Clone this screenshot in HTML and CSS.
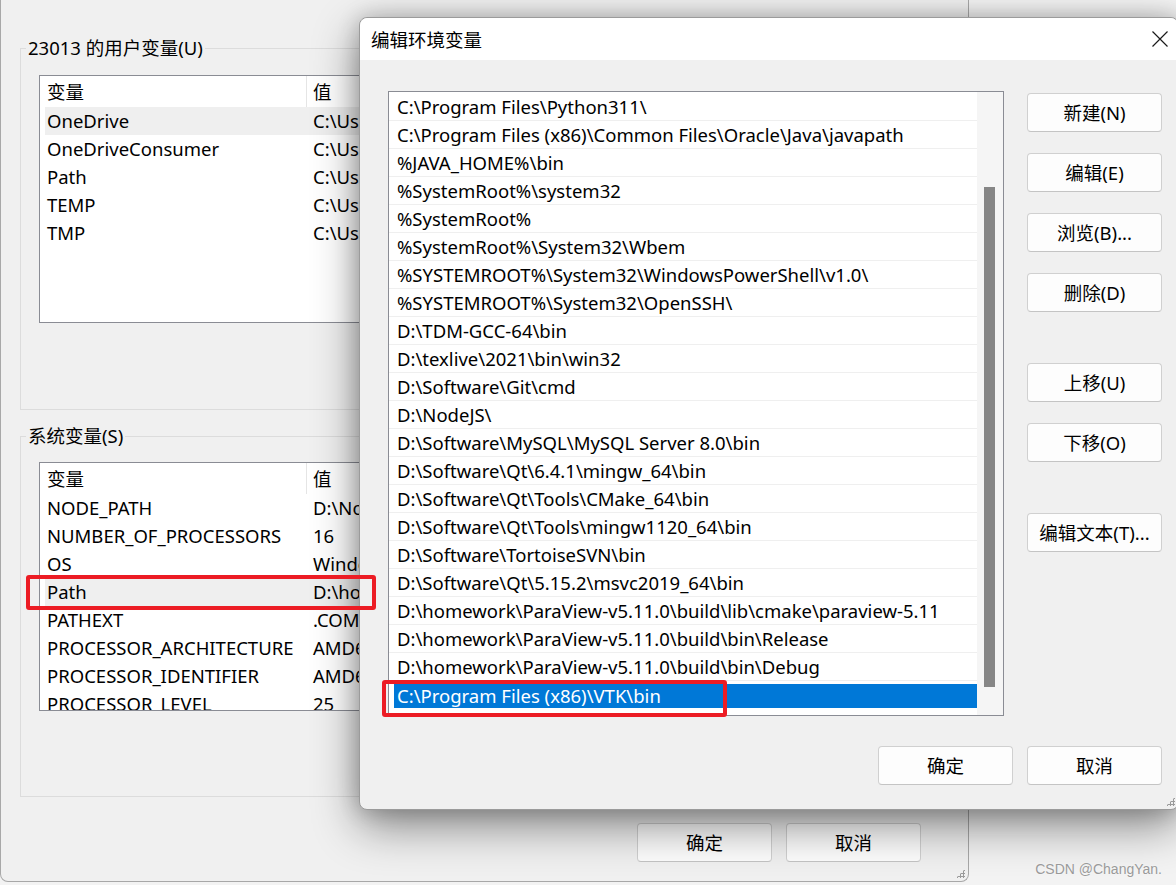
FILE: index.html
```html
<!DOCTYPE html>
<html lang="zh-CN">
<head>
  <meta charset="UTF-8">
  <meta name="viewport" content="width=device-width, initial-scale=1.0">
  <title>编辑环境变量</title>
  <link rel="stylesheet" href="styles.css">
</head>

<body>
  <!-- Background: environment variables window -->
  <div id="env-window" class="window">
    <fieldset class="group group-user">
      <legend>23013 的用户变量(U)</legend>
      <div class="var-list user-list">
        <div class="var-head"><span class="col-name">变量</span><span class="col-value">值</span></div>
        <div class="var-row hover"><span class="col-name">OneDrive</span><span class="col-value">C:\Users</span></div>
        <div class="var-row"><span class="col-name">OneDriveConsumer</span><span class="col-value">C:\Users</span></div>
        <div class="var-row"><span class="col-name">Path</span><span class="col-value">C:\Users</span></div>
        <div class="var-row"><span class="col-name">TEMP</span><span class="col-value">C:\Users</span></div>
        <div class="var-row"><span class="col-name">TMP</span><span class="col-value">C:\Users</span></div>
      </div>
    </fieldset>

    <fieldset class="group group-system">
      <legend>系统变量(S)</legend>
      <div class="var-list system-list">
        <div class="var-head"><span class="col-name">变量</span><span class="col-value">值</span></div>
        <div class="var-row"><span class="col-name">NODE_PATH</span><span class="col-value">D:\NodeJS</span></div>
        <div class="var-row"><span class="col-name">NUMBER_OF_PROCESSORS</span><span class="col-value">16</span></div>
        <div class="var-row"><span class="col-name">OS</span><span class="col-value">Windows_NT</span></div>
        <div class="var-row hover"><span class="col-name">Path</span><span class="col-value">D:\homework</span></div>
        <div class="var-row"><span class="col-name">PATHEXT</span><span class="col-value">.COM;.EXE</span></div>
        <div class="var-row"><span class="col-name">PROCESSOR_ARCHITECTURE</span><span class="col-value">AMD64</span></div>
        <div class="var-row"><span class="col-name">PROCESSOR_IDENTIFIER</span><span class="col-value">AMD64</span></div>
        <div class="var-row"><span class="col-name">PROCESSOR_LEVEL</span><span class="col-value">25</span></div>
      </div>
    </fieldset>

    <div class="window-footer">
      <button class="win-btn">确定</button>
      <button class="win-btn">取消</button>
    </div>
    <div class="grip"></div>
  </div>

  <!-- Foreground: edit dialog -->
  <div id="edit-dialog" class="dialog">
    <div class="title-bar">
      <span class="title">编辑环境变量</span>
      <button class="close-btn">
        <svg width="16" height="16" viewBox="0 0 16 16"><path d="M0.5 0.5 L15.5 15.5 M15.5 0.5 L0.5 15.5" stroke="#1a1a1a" stroke-width="1.2" fill="none"/></svg>
      </button>
    </div>

    <div class="dialog-body">
      <div class="dialog-main">
        <div class="path-list">
          <div class="path-rows">
            <div class="path-row">C:\Program Files\Python311\</div>
            <div class="path-row">C:\Program Files (x86)\Common Files\Oracle\Java\javapath</div>
            <div class="path-row">%JAVA_HOME%\bin</div>
            <div class="path-row">%SystemRoot%\system32</div>
            <div class="path-row">%SystemRoot%</div>
            <div class="path-row">%SystemRoot%\System32\Wbem</div>
            <div class="path-row">%SYSTEMROOT%\System32\WindowsPowerShell\v1.0\</div>
            <div class="path-row">%SYSTEMROOT%\System32\OpenSSH\</div>
            <div class="path-row">D:\TDM-GCC-64\bin</div>
            <div class="path-row">D:\texlive\2021\bin\win32</div>
            <div class="path-row">D:\Software\Git\cmd</div>
            <div class="path-row">D:\NodeJS\</div>
            <div class="path-row">D:\Software\MySQL\MySQL Server 8.0\bin</div>
            <div class="path-row">D:\Software\Qt\6.4.1\mingw_64\bin</div>
            <div class="path-row">D:\Software\Qt\Tools\CMake_64\bin</div>
            <div class="path-row">D:\Software\Qt\Tools\mingw1120_64\bin</div>
            <div class="path-row">D:\Software\TortoiseSVN\bin</div>
            <div class="path-row">D:\Software\Qt\5.15.2\msvc2019_64\bin</div>
            <div class="path-row">D:\homework\ParaView-v5.11.0\build\lib\cmake\paraview-5.11</div>
            <div class="path-row">D:\homework\ParaView-v5.11.0\build\bin\Release</div>
            <div class="path-row">D:\homework\ParaView-v5.11.0\build\bin\Debug</div>
            <div class="path-row selected"><span>C:\Program Files (x86)\VTK\bin</span></div>
          </div>
          <div class="scrollbar"><div class="thumb"></div></div>
        </div>

        <div class="side-buttons">
          <button class="win-btn">新建(N)</button>
          <button class="win-btn">编辑(E)</button>
          <button class="win-btn">浏览(B)...</button>
          <button class="win-btn">删除(D)</button>
          <button class="win-btn spaced">上移(U)</button>
          <button class="win-btn">下移(O)</button>
          <button class="win-btn spaced">编辑文本(T)...</button>
        </div>
      </div>

      <div class="dialog-footer">
        <button class="win-btn">确定</button>
        <button class="win-btn">取消</button>
      </div>
    </div>
    <div class="grip"></div>
  </div>

  <!-- Annotation boxes -->
  <div class="mark mark-path"></div>
  <div class="mark mark-vtk"></div>

  <div class="watermark">CSDN @ChangYan.</div>
</body>
</html>
```

FILE: styles.css
```css
body {
  margin: 0;
  width: 1176px;
  height: 885px;
  overflow: hidden;
  position: relative;
  background: #f3f3f3;
  font-family: "Noto Sans", "Noto Sans CJK SC", sans-serif;
  font-size: 18.5px;
  color: #000;
}

button {
  font-family: inherit;
  font-size: inherit;
  color: inherit;
}

/* ---------- background window ---------- */

#env-window {
  position: absolute;
  left: 0;
  top: 0;
  width: 967px;
  padding: 34px 0 19px 0;
  background: #f0f0f0;
  border: 1px solid #a8a8a8;
  border-top: none;
  border-radius: 0 0 8px 8px;
  z-index: 1;
}

.group {
  margin: 0 0 0 19px;
  width: 890px;
  min-width: 0;
  border: 1px solid #dcdcdc;
  padding: 13px 18px 86px 18px;
}

.group legend {
  margin-left: -13px;
  padding: 0 2px;
  line-height: 28px;
}

.group-user {
  margin-bottom: 12px;
}

.group-system {
  padding-top: 12px;
  padding-bottom: 85px;
}

/* the list runs on under the dialog, so it is cut just past its edge */
.var-list {
  width: 330px;
  background: white;
  border: 1px solid #8a8c94;
  overflow: hidden;
  white-space: nowrap;
}

.user-list {
  height: 246px;
}

.system-list {
  height: 247px;
}

.var-head {
  display: flex;
  height: 31px;
  line-height: 31px;
}

.var-head .col-name {
  flex-shrink: 0;
  width: 259px;
  padding-left: 7px;
  border-right: 1px solid #e5e5e5;
}

.var-head .col-value {
  padding-left: 6px;
}

.var-row {
  display: flex;
  height: 28px;
  line-height: 28px;
  margin-left: 5px;
}

.var-row.hover {
  background: #efefef;
}

.var-row .col-name {
  flex-shrink: 0;
  width: 264px;
  padding-left: 2px;
}

.var-row .col-value {
  padding-left: 2px;
}

.window-footer {
  display: flex;
  justify-content: flex-end;
  gap: 14px;
  margin-top: 26px;
  padding-right: 47px;
}

.win-btn {
  width: 135px;
  height: 39px;
  padding: 0;
  background: #fdfdfd;
  border: 1px solid #d0d0d0;
  border-bottom-color: #c4c4c4;
  border-radius: 4px;
  line-height: 37px;
  text-align: center;
  cursor: default;
}

.grip {
  position: absolute;
  right: 3px;
  bottom: 3px;
  width: 9px;
  height: 9px;
  background-image: radial-gradient(circle, #9a9a9a 1px, transparent 1.2px);
  background-size: 3px 3px;
  clip-path: polygon(100% 0, 100% 100%, 0 100%);
}

/* ---------- edit dialog ---------- */

#edit-dialog {
  position: absolute;
  left: 359px;
  top: 17px;
  width: 818px;
  background: #f0f0f0;
  border: 1px solid #9b9b9b;
  border-radius: 8px;
  box-shadow: 0 16px 46px rgba(0, 0, 0, 0.45), 0 0 22px rgba(0, 0, 0, 0.2);
  z-index: 2;
}

.title-bar {
  height: 42px;
  display: flex;
  align-items: center;
  justify-content: space-between;
  padding-left: 11px;
  background: white;
  border-radius: 8px 8px 0 0;
}

.close-btn {
  width: 36px;
  height: 42px;
  display: flex;
  align-items: center;
  justify-content: center;
  padding: 0;
  background: none;
  border: none;
}

.dialog-body {
  padding: 31px 0 24px 28px;
}

.dialog-main {
  display: flex;
  gap: 23px;
}

.path-list {
  width: 614px;
  height: 623px;
  display: flex;
  background: white;
  border: 1px solid #8a8c94;
}

.path-rows {
  flex: 1;
  padding-top: 1px;
  overflow: hidden;
  white-space: nowrap;
}

.path-row {
  height: 27px;
  line-height: 27px;
  padding-left: 8px;
  border-bottom: 1px solid #efefef;
}

.path-row.selected {
  height: 24px;
  padding: 3px 0 1px 5px;
  border-bottom: none;
}

.path-row.selected span {
  display: block;
  height: 24px;
  line-height: 24px;
  padding-left: 3px;
  background: #0078d7;
  color: white;
}

.scrollbar {
  width: 26px;
  background: #f5f5f5;
  position: relative;
}

.thumb {
  position: absolute;
  left: 7px;
  top: 95px;
  width: 11px;
  height: 500px;
  background: #868686;
}

.side-buttons {
  display: flex;
  flex-direction: column;
  gap: 21px;
  padding-top: 2px;
}

.side-buttons .spaced {
  margin-top: 30px;
}

.dialog-footer {
  display: flex;
  justify-content: flex-end;
  gap: 14px;
  margin-top: 30px;
  padding-right: 16px;
}

/* ---------- annotations ---------- */

.mark {
  position: absolute;
  border: 4px solid #ec1c24;
  border-radius: 3px;
  z-index: 5;
}

.mark-path {
  left: 26px;
  top: 575px;
  width: 342px;
  height: 27px;
}

.mark-vtk {
  left: 382px;
  top: 680px;
  width: 337px;
  height: 29px;
}

.watermark {
  position: absolute;
  right: 14px;
  bottom: 8px;
  font-family: "Liberation Sans", Arial, sans-serif;
  font-size: 14px;
  color: #9a9a9a;
  text-shadow: 0 0 2px rgba(255, 255, 255, 0.8);
  z-index: 6;
}
```
